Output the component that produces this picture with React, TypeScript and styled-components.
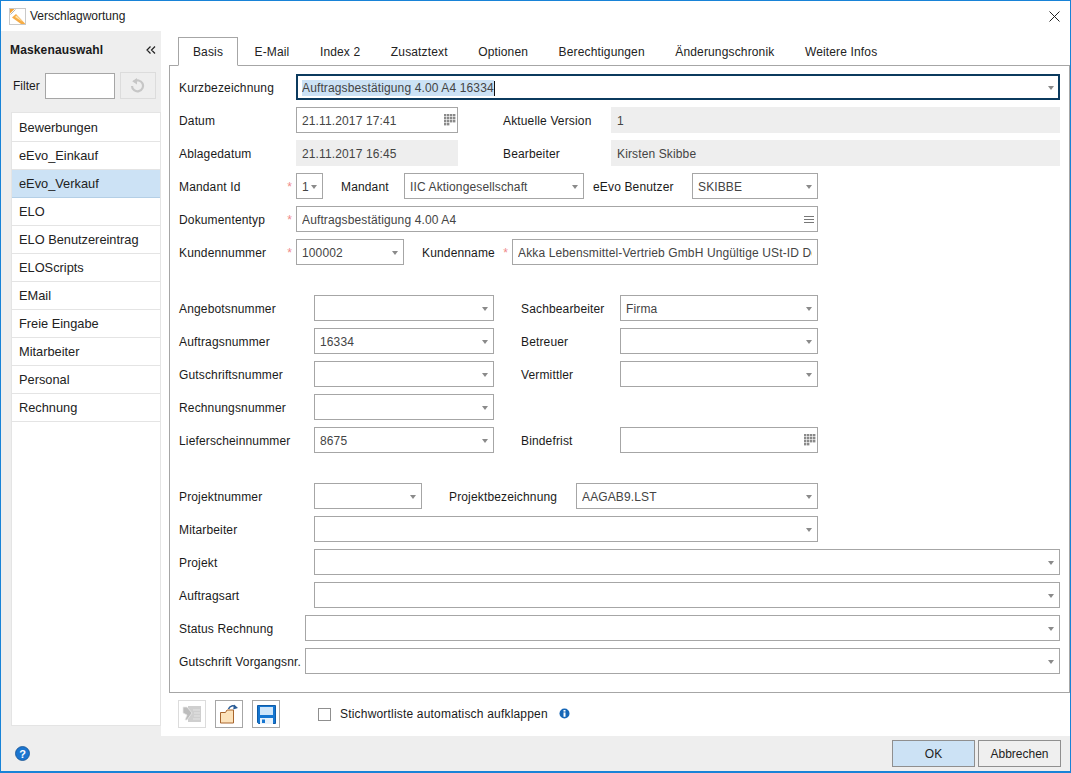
import React from "react";
import styled, { createGlobalStyle } from "styled-components";

const GlobalStyle = createGlobalStyle`
  html, body {
    margin: 0;
    padding: 0;
    background: #fff;
  }

  body {
    font-family: "Liberation Sans", Arial, sans-serif;
    font-size: 12px;
    color: #1a1a1a;
  }
`;

const MASKS = [
  "Bewerbungen",
  "eEvo_Einkauf",
  "eEvo_Verkauf",
  "ELO",
  "ELO Benutzereintrag",
  "ELOScripts",
  "EMail",
  "Freie Eingabe",
  "Mitarbeiter",
  "Personal",
  "Rechnung",
];

const TABS = [
  "Basis",
  "E-Mail",
  "Index 2",
  "Zusatztext",
  "Optionen",
  "Berechtigungen",
  "Änderungschronik",
  "Weitere Infos",
];

const CalendarIcon = () => (
  <CalendarGlyph width="12" height="12" viewBox="0 0 12 12" fill="#8a8a8a">
    {[0, 3, 6, 9].map((y) =>
      [0, 3, 6, 9]
        .filter((x) => y < 9 || x < 6)
        .map((x) => <rect key={`${x}-${y}`} x={x} y={y} width="2.4" height="2.4" />)
    )}
  </CalendarGlyph>
);

const MenuIcon = () => (
  <MenuGlyph width="10" height="7" viewBox="0 0 10 7" stroke="#777" strokeWidth="1">
    <path d="M0 .5h10M0 3.5h10M0 6.5h10" />
  </MenuGlyph>
);

const Logo = () => (
  <svg width="17" height="17" viewBox="0 0 17 17">
    <rect x="0.5" y="0.5" width="16" height="16" fill="#fff" stroke="#c9c9c9" />
    <path d="M1 1h4.500L1 5.500z" fill="#f3a02f" />
    <path d="M6.500 1.500L1.500 6.500" stroke="#b4b4b4" strokeWidth="1" />
    <path d="M3 9.500l4-3.500 9 9.500v0.500H12z" fill="#f6ac45" />
    <path d="M6 9l1.500-1.500L14 14z" fill="#fde3ad" />
  </svg>
);

const CloseIcon = () => (
  <svg width="11" height="11" viewBox="0 0 11 11" stroke="#222" strokeWidth="1">
    <path d="M0.5 0.5l10 10M10.5 0.5l-10 10" />
  </svg>
);

const CollapseIcon = () => (
  <svg width="10" height="8" viewBox="0 0 10 8" fill="none" stroke="#222" strokeWidth="1.2">
    <path d="M4.5 0.5L1 4l3.5 3.5M9 0.5L5.500 4 9 7.500" />
  </svg>
);

const ResetIcon = () => (
  <svg width="15" height="15" viewBox="0 0 15 15" fill="none">
    <path d="M4 3.600A5.500 5.500 0 1 1 2 8" stroke="#c6c6c6" strokeWidth="2.200" />
    <path d="M7 0v6.600L2.200 3.300z" fill="#c6c6c6" />
  </svg>
);

const HelpIcon = () => (
  <svg width="15" height="15" viewBox="0 0 15 15">
    <circle cx="7.5" cy="7.5" r="7" fill="#1b75cf" stroke="#14508f" strokeWidth="0.8" />
    <text x="7.5" y="11.5" textAnchor="middle" fontSize="11" fontWeight="700" fontFamily="Liberation Sans" fill="#fff">
      ?
    </text>
  </svg>
);

const InfoIcon = () => (
  <InfoGlyph width="11" height="11" viewBox="0 0 11 11">
    <circle cx="5.5" cy="5.5" r="5" fill="#1566b7" />
    <rect x="4.5" y="2" width="2" height="1.6" fill="#fff" />
    <rect x="4.5" y="4.4" width="2" height="4.4" fill="#fff" />
  </InfoGlyph>
);

const ImportIcon = () => (
  <svg width="20" height="20" viewBox="0 0 20 20">
    <rect x="6" y="2" width="13" height="16" fill="#cfcfcf" />
    <path d="M11 6h7M12 9h6M12 12h6M11 15h7" stroke="#e4e4e4" strokeWidth="1" />
    <path d="M1 3h4l5 6-5 7H3l2-5-4-2z" fill="#bdbdbd" stroke="#ececec" strokeWidth="0.7" />
  </svg>
);

const FolderIcon = () => (
  <svg width="20" height="20" viewBox="0 0 20 20">
    <path d="M1.500 8.500h5l1.500-2.500h6.500v13h-13z" fill="#fde3bb" stroke="#a8652c" strokeWidth="1" />
    <path d="M9.500 5C11 1.500 14.500 1 16.500 3" fill="none" stroke="#2a5c96" strokeWidth="1.6" />
    <path d="M15 0.500l4 3.500-4.800 1.500z" fill="#2a5c96" />
  </svg>
);

const SaveIcon = () => (
  <svg width="19" height="19" viewBox="0 0 19 19">
    <path d="M0.500 0.500h18v18h-17l-1-1z" fill="#1576d1" stroke="#0f5ba6" />
    <rect x="3" y="2" width="13" height="8" fill="#cfe6fa" />
    <rect x="3" y="13" width="13" height="6" fill="#e8f2fb" />
    <rect x="5" y="14.500" width="3" height="3.500" fill="#1576d1" />
  </svg>
);

type FieldProps = {
  width?: number;
  value?: string;
  readOnly?: boolean;
  focused?: boolean;
  icon?: "caret" | "calendar" | "menu" | "none";
};

const Field: React.FC<FieldProps> = ({ width, value, readOnly, focused, icon = "caret" }) => (
  <FieldBox $width={width} $readOnly={readOnly} $focused={focused}>
    {focused ? (
      <FieldValue>
        <Selection>{value}</Selection>
        <TextCursor />
      </FieldValue>
    ) : (
      <FieldValue>{value}</FieldValue>
    )}
    {!readOnly && icon === "caret" && <CaretShape />}
    {!readOnly && icon === "calendar" && <CalendarIcon />}
    {!readOnly && icon === "menu" && <MenuIcon />}
  </FieldBox>
);

const App: React.FC = () => (
  <>
    <GlobalStyle />
    <Window>
      <TitleBar>
        <Logo />
        <WindowTitle>Verschlagwortung</WindowTitle>
        <CloseButton>
          <CloseIcon />
        </CloseButton>
      </TitleBar>

      <Body>
        <Sidebar>
          <SidebarHead>
            <strong>Maskenauswahl</strong>
            <CollapseIcon />
          </SidebarHead>
          <FilterRow>
            <span>Filter</span>
            <FilterInput />
            <ResetButton>
              <ResetIcon />
            </ResetButton>
          </FilterRow>
          <MaskList>
            {MASKS.map((mask) => (
              <MaskItem key={mask} $active={mask === "eEvo_Verkauf"}>
                {mask}
              </MaskItem>
            ))}
          </MaskList>
        </Sidebar>

        <Main>
          <TabBar>
            {TABS.map((tab, index) => (
              <Tab key={tab} $active={index === 0}>
                {tab}
              </Tab>
            ))}
          </TabBar>

          <Panel>
            <Section>
              <Row>
                <Label $width={117}>Kurzbezeichnung</Label>
                <Field focused value="Auftragsbestätigung 4.00 A4 16334" />
              </Row>
              <Row>
                <Label $width={117}>Datum</Label>
                <Field width={162} value="21.11.2017 17:41" icon="calendar" />
                <Label $width={108} $gap={45}>
                  Aktuelle Version
                </Label>
                <Field readOnly value="1" />
              </Row>
              <Row>
                <Label $width={117}>Ablagedatum</Label>
                <Field width={162} readOnly value="21.11.2017 16:45" />
                <Label $width={108} $gap={45}>
                  Bearbeiter
                </Label>
                <Field readOnly value="Kirsten Skibbe" />
              </Row>
              <Row>
                <Label $width={117}>
                  Mandant Id<Star>*</Star>
                </Label>
                <Field width={27} value="1" />
                <Label $width={63} $gap={18}>
                  Mandant
                </Label>
                <Field width={180} value="IIC Aktiongesellschaft" />
                <Label $width={99} $gap={9}>
                  eEvo Benutzer
                </Label>
                <Field width={126} value="SKIBBE" />
              </Row>
              <Row>
                <Label $width={117}>
                  Dokumententyp<Star>*</Star>
                </Label>
                <Field width={522} value="Auftragsbestätigung 4.00 A4" icon="menu" />
              </Row>
              <Row>
                <Label $width={117}>
                  Kundennummer<Star>*</Star>
                </Label>
                <Field width={108} value="100002" />
                <Label $width={90} $gap={18}>
                  Kundenname<Star>*</Star>
                </Label>
                <Field width={306} icon="none" value="Akka Lebensmittel-Vertrieb GmbH Ungültige USt-ID Deutschland" />
              </Row>
            </Section>

            <Section>
              <Row>
                <Label $width={135}>Angebotsnummer</Label>
                <Field width={180} />
                <Label $width={99} $gap={27}>
                  Sachbearbeiter
                </Label>
                <Field width={198} value="Firma" />
              </Row>
              <Row>
                <Label $width={135}>Auftragsnummer</Label>
                <Field width={180} value="16334" />
                <Label $width={99} $gap={27}>
                  Betreuer
                </Label>
                <Field width={198} />
              </Row>
              <Row>
                <Label $width={135}>Gutschriftsnummer</Label>
                <Field width={180} />
                <Label $width={99} $gap={27}>
                  Vermittler
                </Label>
                <Field width={198} />
              </Row>
              <Row>
                <Label $width={135}>Rechnungsnummer</Label>
                <Field width={180} />
              </Row>
              <Row>
                <Label $width={135}>Lieferscheinnummer</Label>
                <Field width={180} value="8675" />
                <Label $width={99} $gap={27}>
                  Bindefrist
                </Label>
                <Field width={198} icon="calendar" />
              </Row>
            </Section>

            <Section>
              <Row>
                <Label $width={135}>Projektnummer</Label>
                <Field width={108} />
                <Label $width={127} $gap={27}>
                  Projektbezeichnung
                </Label>
                <Field width={242} value="AAGAB9.LST" />
              </Row>
              <Row>
                <Label $width={135}>Mitarbeiter</Label>
                <Field width={504} />
              </Row>
              <Row>
                <Label $width={135}>Projekt</Label>
                <Field />
              </Row>
              <Row>
                <Label $width={135}>Auftragsart</Label>
                <Field />
              </Row>
              <Row>
                <Label $width={126}>Status Rechnung</Label>
                <Field />
              </Row>
              <Row>
                <Label $width={126}>Gutschrift Vorgangsnr.</Label>
                <Field />
              </Row>
            </Section>
          </Panel>

          <Toolbar>
            <ToolButton $disabled>
              <ImportIcon />
            </ToolButton>
            <ToolButton>
              <FolderIcon />
            </ToolButton>
            <ToolButton>
              <SaveIcon />
            </ToolButton>
            <CheckLabel>
              <CheckBox />
              Stichwortliste automatisch aufklappen
            </CheckLabel>
            <InfoIcon />
          </Toolbar>
        </Main>

        <Footer>
          <HelpIcon />
          <FooterActions>
            <DialogButton $primary>OK</DialogButton>
            <DialogButton>Abbrechen</DialogButton>
          </FooterActions>
        </Footer>
      </Body>
    </Window>
  </>
);

export default App;

const Window = styled.div`
  width: 1071px;
  height: 773px;
  box-sizing: border-box;

  display: flex;
  flex-direction: column;

  overflow: hidden;

  border: 1px solid #1883d7;
  border-bottom-width: 2px;

  background: #fff;
`;

const TitleBar = styled.div`
  height: 30px;
  flex-shrink: 0;

  display: flex;
  align-items: center;

  padding: 0 10px 0 8px;
`;

const WindowTitle = styled.div`
  margin-left: 4px;

  flex-grow: 1;

  color: #222;
`;

const CloseButton = styled.div`
  display: flex;
`;

const Body = styled.div`
  flex-grow: 1;
  min-height: 0;

  display: grid;
  grid-template-columns: 160px 1fr;
  grid-template-rows: 1fr 35px;
`;

const Sidebar = styled.div`
  display: flex;
  flex-direction: column;

  padding: 0 0 10px 10px;

  background: #eee;
`;

const SidebarHead = styled.div`
  height: 38px;
  margin-bottom: 3px;
  padding-right: 5px;

  display: flex;
  align-items: center;
  justify-content: space-between;

  > strong {
    margin-left: -1px;

    letter-spacing: 0.15px;

    color: #1a1a1a;
  }
`;

const FilterRow = styled.div`
  height: 27px;
  margin-bottom: 13px;

  display: flex;
  align-items: center;

  padding-left: 2px;
`;

const FilterInput = styled.div`
  width: 70px;
  height: 26px;
  box-sizing: border-box;
  margin-left: 5px;

  border: 1px solid #a6a6a6;

  background: #fff;
`;

const ResetButton = styled.div`
  width: 36px;
  height: 27px;
  box-sizing: border-box;
  margin-left: 5px;

  display: flex;
  align-items: center;
  justify-content: center;

  border: 1px solid #dcdcdc;
`;

const MaskList = styled.div`
  flex-grow: 1;
  padding-top: 1px;

  border: 1px solid #e4e4e4;

  background: #fff;
`;

const MaskItem = styled.div<{ $active?: boolean }>`
  height: 27px;
  padding-left: 7px;

  display: flex;
  align-items: center;

  border-bottom: 1px solid ${(p) => (p.$active ? "#b4cfe6" : "#e4e4e4")};

  background: ${(p) => (p.$active ? "#cce2f5" : "#fff")};

  color: #222;

  font-size: 12.8px;
`;

const Main = styled.div`
  min-width: 0;

  display: flex;
  flex-direction: column;

  padding: 6px 0 0 8px;
`;

const TabBar = styled.div`
  height: 28px;
  flex-shrink: 0;
  padding-left: 9px;

  display: flex;
`;

const Tab = styled.div<{ $active?: boolean }>`
  height: 29px;
  box-sizing: border-box;
  margin-right: 2.5px;
  padding: 0 13px;

  position: relative;
  z-index: 1;

  display: flex;
  align-items: center;
  justify-content: center;

  ${(p) => (p.$active ? "min-width: 60px;" : "")}

  border: 1px solid ${(p) => (p.$active ? "#a6a6a6" : "transparent")};
  border-bottom-color: ${(p) => (p.$active ? "#fff" : "transparent")};

  background: ${(p) => (p.$active ? "#fff" : "transparent")};

  letter-spacing: 0.15px;

  color: #222;
`;

const Panel = styled.div`
  height: 628px;
  box-sizing: border-box;
  flex-shrink: 0;
  padding: 8px 9px 0;

  display: flex;
  flex-direction: column;
  gap: 30px;

  border: 1px solid #a6a6a6;
`;

const Section = styled.div`
  display: flex;
  flex-direction: column;
  gap: 7px;
`;

const Row = styled.div`
  height: 26px;

  display: flex;
  align-items: center;
`;

const Label = styled.div<{ $width: number; $gap?: number }>`
  width: ${(p) => p.$width}px;
  flex-shrink: 0;
  margin-left: ${(p) => p.$gap ?? 0}px;
  padding-top: 2px;

  display: flex;
  justify-content: space-between;

  white-space: nowrap;
  letter-spacing: 0.15px;

  color: #1a1a1a;
`;

const Star = styled.span`
  margin-right: 4px;

  color: #ef8a8a;
`;

const FieldBox = styled.div<{ $width?: number; $readOnly?: boolean; $focused?: boolean }>`
  ${(p) => (p.$width ? `width: ${p.$width}px; flex-shrink: 0;` : "flex: 1;")}
  min-width: 0;
  height: 26px;
  box-sizing: border-box;
  padding: 0 ${(p) => (p.$focused ? "4px" : "5px")};

  display: flex;
  align-items: center;

  border: ${(p) =>
    p.$focused ? "2px solid #0b3a5e" : p.$readOnly ? "1px solid #eee" : "1px solid #a6a6a6"};

  background: ${(p) => (p.$readOnly ? "#eee" : "#fff")};

  color: #444;
`;

const FieldValue = styled.div`
  flex-grow: 1;
  min-width: 0;
  padding-top: 2px;

  display: flex;
  align-items: center;

  overflow: hidden;

  white-space: nowrap;
  letter-spacing: 0.13px;
`;

const Selection = styled.span`
  background: #cce2f5;

  line-height: 16px;
`;

const TextCursor = styled.span`
  width: 1px;
  height: 15px;

  background: #111;
`;

const CaretShape = styled.span`
  width: 0;
  height: 0;
  flex-shrink: 0;
  margin-top: 2px;

  border-left: 3px solid transparent;
  border-right: 3px solid transparent;
  border-top: 4px solid #8a8a8a;
`;

const CalendarGlyph = styled.svg`
  flex-shrink: 0;
  margin-right: -4px;
`;

const MenuGlyph = styled.svg`
  flex-shrink: 0;
  margin-right: -2px;
`;

const InfoGlyph = styled.svg`
  margin-left: 2px;
  margin-top: -1px;
`;

const Toolbar = styled.div`
  flex-grow: 1;
  padding: 7px 0 8px 9px;

  display: flex;
  align-items: center;
  gap: 9px;
`;

const ToolButton = styled.div<{ $disabled?: boolean }>`
  width: 28px;
  height: 28px;
  box-sizing: border-box;

  display: flex;
  align-items: center;
  justify-content: center;

  border: 1px solid ${(p) => (p.$disabled ? "#dcdcdc" : "#a6a6a6")};
`;

const CheckLabel = styled.div`
  margin-left: 29px;

  display: flex;
  align-items: center;

  letter-spacing: 0.19px;

  color: #1a1a1a;
`;

const CheckBox = styled.span`
  width: 13px;
  height: 13px;
  box-sizing: border-box;
  margin-right: 9px;

  border: 1px solid #8f8f8f;

  background: #fff;
`;

const Footer = styled.div`
  grid-column: 1 / span 2;

  display: flex;
  align-items: center;
  justify-content: space-between;

  padding: 0 9px 0 14px;

  background: #eee;
`;

const FooterActions = styled.div`
  display: flex;
  gap: 3px;
`;

const DialogButton = styled.div<{ $primary?: boolean }>`
  width: 83px;
  height: 27px;
  box-sizing: border-box;

  display: flex;
  align-items: center;
  justify-content: center;

  border: 1px solid #8f8f8f;

  background: ${(p) => (p.$primary ? "#cce2f5" : "#efefef")};

  color: #222;
`;
